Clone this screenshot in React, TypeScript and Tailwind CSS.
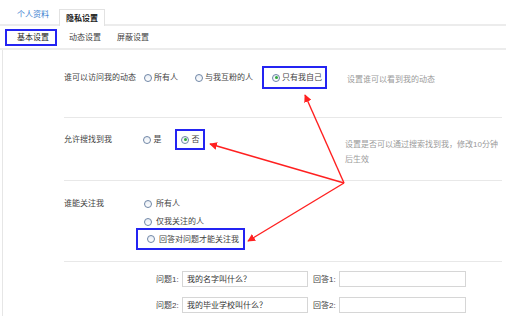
import React from 'react';

const font = { fontFamily: '"Liberation Sans", "Noto Sans CJK SC", sans-serif' };

function Radio({ checked = false }: { checked?: boolean }) {
  return (
    <span className="flex h-[8px] w-[8px] shrink-0 items-center justify-center rounded-full border border-[#6f86a6] bg-gradient-to-b from-[#e9eef5] to-white">
      {checked && <span className="h-[3px] w-[3px] rounded-full bg-[#2fa83a]" />}
    </span>
  );
}

function Option({ label, checked, gap = 'gap-[2px]' }: { label: string; checked?: boolean; gap?: string }) {
  return (
    <span className={`flex items-center ${gap}`}>
      <Radio checked={checked} />
      <span>{label}</span>
    </span>
  );
}

function Boxed({ children, className = '' }: { children: React.ReactNode; className?: string }) {
  return <div className={`flex items-center border-2 border-[#2424f2] ${className}`}>{children}</div>;
}

export default function App() {
  return (
    <div className="relative h-[316px] w-[506px] overflow-hidden bg-white text-[8px] leading-[15px] text-[#444]" style={font}>
      {/* main tabs */}
      <div className="flex h-[26px] items-end border-b-2 border-[#ececec] pl-[17px]">
        <span className="mb-[1px] h-[16px] pr-[10px] text-[#3b7fd0]">个人资料</span>
        <span className="-mb-[2px] flex h-[17px] items-center border border-b-0 border-[#e2e2e2] bg-white px-[6px] font-bold text-[#222]">
          隐私设置
        </span>
      </div>

      {/* sub tabs */}
      <div className="flex h-[24px] items-center border-b-2 border-[#ececec] pl-[5px]">
        <Boxed className="h-[17px] w-[52px] pl-[10px] text-[#222]">基本设置</Boxed>
        <span className="ml-[12px]">动态设置</span>
        <span className="ml-[16px]">屏蔽设置</span>
      </div>

      {/* content */}
      <div className="ml-[2px] h-[266px] border-l border-[#e6e6e6] pl-[61px] pr-[4px]">
        {/* row 1 */}
        <div className="flex h-[68px] border-b border-[#e8e8e8] pt-[16px]">
          <div className="flex h-[23px] w-[80px] items-center">谁可以访问我的动态</div>
          <div className="flex h-[23px] w-[203px] items-center">
            <Option label="所有人" />
            <span className="ml-[17px]">
              <Option label="与我互粉的人" />
            </span>
            <Boxed className="ml-[9px] h-[23px] w-[65px] pl-[8px]">
              <Option label="只有我自己" checked />
            </Boxed>
          </div>
          <div className="mt-[6px] text-[#9a9a9a]">设置谁可以看到我的动态</div>
        </div>

        {/* row 2 */}
        <div className="flex h-[63px] border-b border-[#e8e8e8] pt-[11px]">
          <div className="flex h-[21px] w-[80px] items-center">允许搜找到我</div>
          <div className="flex h-[21px] w-[203px] items-center">
            <Option label="是" />
            <Boxed className="ml-[14px] h-[21px] w-[30px] pl-[4px]">
              <Option label="否" checked />
            </Boxed>
          </div>
          <div className="mt-[8px] w-[158px] text-[#9a9a9a]">设置是否可以通过搜索找到我，修改10分钟后生效</div>
        </div>

        {/* row 3 */}
        <div className="flex h-[81px] border-b border-[#e8e8e8] pt-[15px]">
          <div className="w-[72px]">谁能关注我</div>
          <div className="flex flex-col">
            <span className="ml-[8px] flex h-[15px] items-center">
              <Option label="所有人" gap="gap-[4px]" />
            </span>
            <span className="ml-[8px] mt-[3px] flex h-[15px] items-center">
              <Option label="仅我关注的人" gap="gap-[4px]" />
            </span>
            <Boxed className="mt-[-1px] h-[22px] w-[109px] pl-[9px]">
              <Option label="回答对问题才能关注我" gap="gap-[4px]" />
            </Boxed>
          </div>
        </div>

        {/* questions */}
        <div className="flex flex-col gap-[10px] pl-[92px] pt-[9px]">
          {[
            ['问题1:', '我的名字叫什么？', '回答1:'],
            ['问题2:', '我的毕业学校叫什么？', '回答2:'],
          ].map(([q, v, a]) => (
            <div key={q} className="flex items-center">
              <span className="w-[26px]">{q}</span>
              <div className="flex h-[16px] w-[126px] items-center border border-[#d6d6d6] px-[4px] text-[#333]">{v}</div>
              <span className="ml-[5px] w-[26px]">{a}</span>
              <div className="h-[16px] w-[127px] border border-[#d6d6d6]" />
            </div>
          ))}
        </div>
      </div>

      {/* annotation arrows */}
      <svg className="pointer-events-none absolute inset-0" width="506" height="316" viewBox="0 0 506 316">
        <defs>
          <marker id="ah" viewBox="0 0 10 10" refX="9" refY="5" markerWidth="5.5" markerHeight="5.5" orient="auto-start-reverse">
            <path d="M0 0 L10 5 L0 10 z" fill="#ff2020" />
          </marker>
        </defs>
        <g stroke="#ff2020" strokeWidth="1.4" fill="none">
          <line x1="344" y1="183" x2="305" y2="95" markerEnd="url(#ah)" />
          <line x1="344" y1="183" x2="210" y2="144" markerEnd="url(#ah)" />
          <line x1="344" y1="183" x2="248" y2="241" markerEnd="url(#ah)" />
        </g>
      </svg>
    </div>
  );
}
